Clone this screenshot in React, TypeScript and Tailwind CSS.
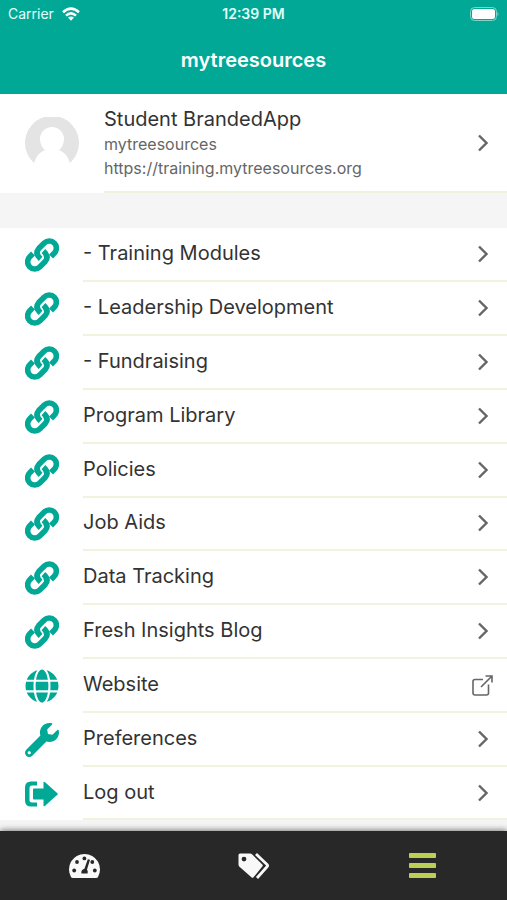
import type { ReactNode } from 'react';
import { FaGlobe, FaWrench } from 'react-icons/fa';

const LinkIcon = () => (
  <svg viewBox="0 0 34 34" className="h-[34px] w-[34px]" fill="none" stroke="currentColor" strokeWidth="5.6" aria-hidden="true">
    <path d="M26 18.4L29.2 15.2A6.9 6.9 0 0 0 19.3 5L13.8 10.5Q9.5 15.5 15.6 20.8" />
    <path d="M8 15.6L4.8 18.8A6.9 6.9 0 0 0 14.7 29L20.2 23.5Q24.5 18.5 18.4 13.2" />
  </svg>
);

const LogoutIcon = () => (
  <svg viewBox="0 0 33 26" className="h-[26px] w-[33px]" fill="currentColor" aria-hidden="true">
    <path d="M12 0.5H6Q0 0.5 0 6.5V19.5Q0 25.5 6 25.5H12V21.5H7Q4.5 21.5 4.5 19V7Q4.5 4.5 7 4.5H12Z" />
    <path d="M9 7.5H18.5V1.6Q18.5 0 19.8 1.1L32.4 12.2Q33.2 13 32.4 13.8L19.8 24.9Q18.5 26 18.5 24.4V18.5H9Q8 18.5 8 17.5V8.5Q8 7.5 9 7.5Z" />
  </svg>
);

const WifiIcon = () => (
  <svg viewBox="0 0 18 14" className="h-[14px] w-[18px]" fill="none" stroke="#fff" strokeWidth="2.6" aria-hidden="true">
    <path d="M1 5.3Q9 -2 17 5.3" />
    <path d="M4 8.6Q9 4 14 8.6" />
    <path d="M6 10.6Q9 8.2 12 10.6L9 13.8Z" fill="#fff" stroke="none" />
  </svg>
);

const GaugeIcon = () => (
  <svg viewBox="0 0 31 25" className="h-[25px] w-[31px]" aria-hidden="true">
    <path d="M3.8 25Q2.5 25 2 24A15.5 15.5 0 1 1 29 24Q28.5 25 27.2 25Z" fill="currentColor" />
    <g fill="#282828">
      <circle cx="5.2" cy="17.5" r="1.9" />
      <circle cx="8" cy="9" r="1.9" />
      <circle cx="15.4" cy="5.4" r="1.9" />
      <circle cx="23.3" cy="9" r="1.9" />
      <circle cx="25.8" cy="17.5" r="1.9" />
      <path d="M18.8 6.2L21 6.8L18 16.5Q19.2 18 18.6 20.5H12.4Q11.8 17 15.4 15.8Z" />
    </g>
  </svg>
);

const TagsIcon = () => (
  <svg viewBox="0 0 32 26" className="h-[26px] w-[32px]" aria-hidden="true">
    <path
      d="M2 0.5H12Q13.2 0.5 14 1.3L24.3 11.6Q25.3 12.6 24.3 13.6L15.5 24.3Q14.5 25.3 13.4 24.3L1.2 13.4Q0.5 12.6 0.5 11.5V2Q0.5 0.5 2 0.5ZM6 3.7A2.4 2.4 0 1 0 6 8.5A2.4 2.4 0 1 0 6 3.7Z"
      fill="currentColor"
      fillRule="evenodd"
    />
    <path d="M18 1L29 11.6Q30.1 12.7 29 13.8L19 25" fill="none" stroke="currentColor" strokeWidth="2.8" />
  </svg>
);

const Chevron = () => (
  <svg viewBox="0 0 10 18" className="h-[18px] w-[10px]" fill="none" stroke="currentColor" strokeWidth="2.4" aria-hidden="true">
    <path d="M1 1.5L8.5 9L1 16.5" />
  </svg>
);

const ExternalIcon = () => (
  <svg viewBox="0 0 21 21" className="h-[21px] w-[21px]" fill="none" stroke="currentColor" strokeWidth="1.6" aria-hidden="true">
    <path d="M11 4.5H3Q1 4.5 1 6.5V18Q1 20 3 20H14.5Q16.5 20 16.5 18V9.5" />
    <path d="M9 12L19.5 1.5M13.5 1H20V7.5" />
  </svg>
);

type MenuItem = {
  label: string;
  icon: ReactNode;
  external?: boolean;
};

const items: MenuItem[] = [
  { label: '- Training Modules', icon: <LinkIcon /> },
  { label: '- Leadership Development', icon: <LinkIcon /> },
  { label: '- Fundraising', icon: <LinkIcon /> },
  { label: 'Program Library', icon: <LinkIcon /> },
  { label: 'Policies', icon: <LinkIcon /> },
  { label: 'Job Aids', icon: <LinkIcon /> },
  { label: 'Data Tracking', icon: <LinkIcon /> },
  { label: 'Fresh Insights Blog', icon: <LinkIcon /> },
  { label: 'Website', icon: <FaGlobe className="h-[34px] w-[34px]" aria-hidden="true" />, external: true },
  { label: 'Preferences', icon: <FaWrench className="h-[34px] w-[34px]" aria-hidden="true" /> },
  { label: 'Log out', icon: <LogoutIcon /> },
];

export default function App() {
  return (
    <div className="flex min-h-screen flex-col bg-[#f5f5f5] font-['Inter',sans-serif] text-[#333]">
      <header className="bg-[#02a896] text-white">
        {/* Status Bar */}
        <div className="grid h-7 grid-cols-3 items-center px-2 text-sm text-[#e2fffa]">
          <span className="flex items-center gap-2">
            Carrier
            <WifiIcon />
          </span>
          <span className="text-center font-semibold">12:39 PM</span>
          <svg viewBox="0 0 29 14" className="h-[14px] w-[29px] justify-self-end" aria-hidden="true">
            <rect x="0.5" y="0.5" width="26" height="13" rx="4" fill="none" stroke="#7fd4ca" />
            <rect x="2" y="2" width="23" height="10" rx="2.5" fill="#fff" />
            <path d="M27.5 5Q29.5 7 27.5 9Z" fill="#7fd4ca" />
          </svg>
        </div>
        <h1 className="flex h-[66px] items-center justify-center pb-0.5 text-xl font-semibold">mytreesources</h1>
      </header>

      <main className="flex grow flex-col pb-[11px]">
        {/* Profile */}
        <button type="button" className="flex w-full items-stretch bg-white pl-[25px] text-left">
          <svg viewBox="0 0 54 54" className="mr-[25px] h-[54px] w-[54px] shrink-0 self-center" aria-hidden="true">
            <path d="M9 46A27 27 0 1 1 45 46Q42 36 34 33Q39 29 39 22A12 12 0 0 0 15 22Q15 29 20 33Q12 36 9 46Z" fill="#e4e4e4" />
          </svg>
          <span className="flex min-w-0 grow items-center border-b-2 border-[#f0f1de] pt-3 pr-[19px] pb-[11px]">
            <span className="min-w-0 grow">
              <span className="block text-xl leading-[26px]">Student BrandedApp</span>
              <span className="block text-base leading-6 text-[#666]">mytreesources</span>
              <span className="block text-base leading-6 text-[#666]">https://training.mytreesources.org</span>
            </span>
            <span className="text-[#666]"><Chevron /></span>
          </span>
        </button>

        {/* Menu */}
        <ul className="mt-[35px] flex grow flex-col bg-white">
          {items.map(({ label, icon, external }) => (
            <li key={label} className="flex min-h-[53px] flex-1">
              <a href="#" className="flex w-full pl-[25px]">
                <span className="mr-6 flex w-[34px] items-center text-[#02a896]">{icon}</span>
                <span className="flex grow items-center justify-between border-b-2 border-[#f2f3df] text-xl">
                  <span className="pb-0.5">{label}</span>
                  <span className={external ? 'pr-[14px] text-[#666]' : 'pr-[19px] text-[#666]'}>
                    {external ? <ExternalIcon /> : <Chevron />}
                  </span>
                </span>
              </a>
            </li>
          ))}
        </ul>
      </main>

      {/* Bottom Tabs */}
      <nav className="grid h-[69px] grid-cols-3 bg-[#282828] text-[#f8f8f8] shadow-[0_-1px_6px_rgba(0,0,0,0.5)]">
        <button type="button" aria-label="Dashboard" className="flex items-center justify-center">
          <GaugeIcon />
        </button>
        <button type="button" aria-label="Tags" className="flex items-center justify-center">
          <TagsIcon />
        </button>
        <button type="button" aria-label="Menu" className="flex items-center justify-center text-[#bccf55]">
          <svg viewBox="0 0 27 25" className="h-[25px] w-[27px]" fill="currentColor" aria-hidden="true">
            <rect width="27" height="5" rx="0.8" />
            <rect y="10" width="27" height="5" rx="0.8" />
            <rect y="20" width="27" height="5" rx="0.8" />
          </svg>
        </button>
      </nav>
    </div>
  );
}
